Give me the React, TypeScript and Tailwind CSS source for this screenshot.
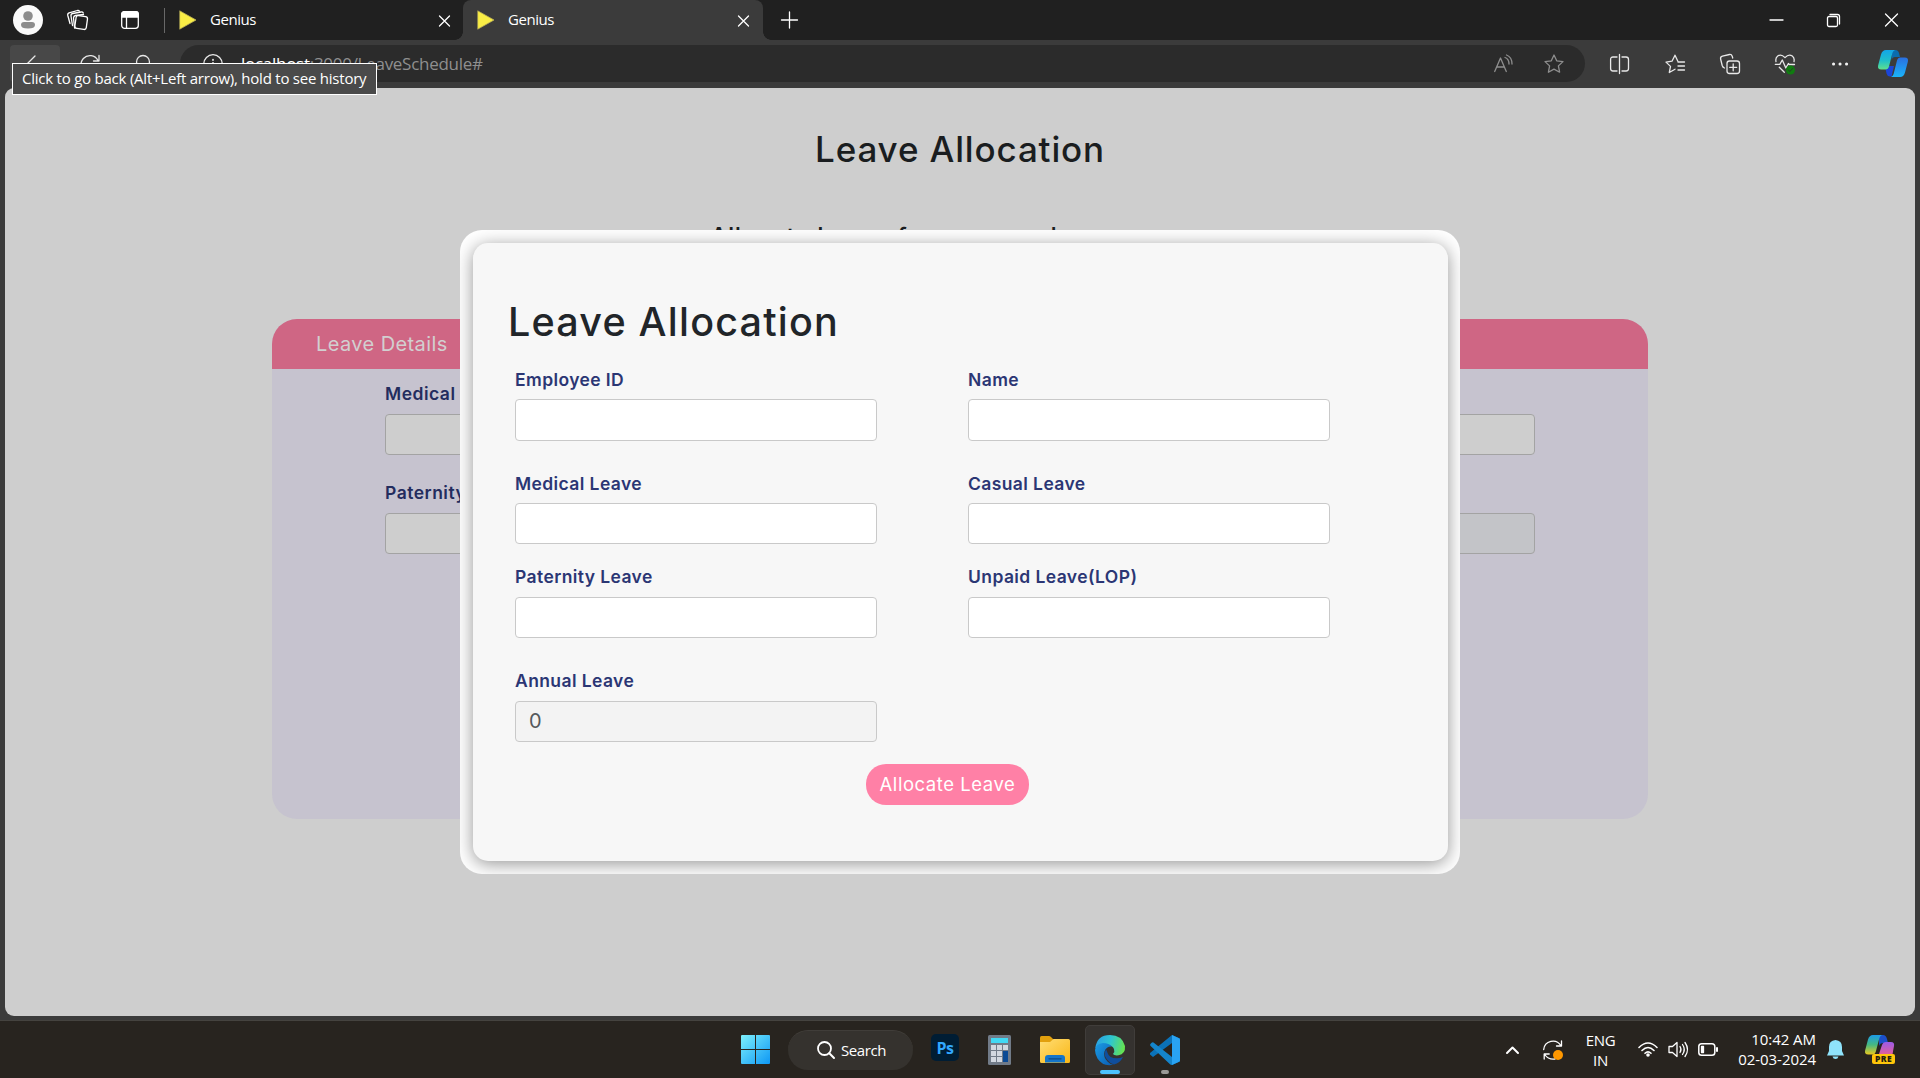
import type { ReactNode } from "react";

const ui = "font-['Open_Sans','Noto_Sans',sans-serif]";
const body = "font-[Inter,'Open_Sans',sans-serif]";

function Icon({ w, h, className = "", children }: { w: number; h: number; className?: string; children: ReactNode }) {
  return (
    <svg
      width={w}
      height={h}
      viewBox={`0 0 ${w} ${h}`}
      fill="none"
      stroke="currentColor"
      strokeWidth="1.3"
      strokeLinecap="round"
      strokeLinejoin="round"
      className={`block shrink-0 overflow-visible ${className}`}
    >
      {children}
    </svg>
  );
}

const Close = ({ className = "" }: { className?: string }) => (
  <Icon w={11} h={11} className={className}>
    <path d="M.5 1l10 10M10.5 1l-10 10" />
  </Icon>
);

const Favicon = ({ className = "" }: { className?: string }) => (
  <Icon w={18} h={20} className={className}>
    <path d="M1 1l16 9-16 9z" fill="#f9ed45" stroke="#b9ae55" strokeWidth=".8" />
  </Icon>
);

function TabStrip() {
  return (
    <div className="flex h-10 items-stretch bg-[#202020] text-white">
      <div className="flex w-[463px] items-center rounded-br-lg">
        <Icon w={30} h={30} className="ml-[13px]">
          <circle cx="15" cy="15" r="15" fill="#fafafa" stroke="none" />
          <circle cx="15" cy="11" r="4.8" fill="#8c8c8c" stroke="none" />
          <path d="M8 20q0-3 3-3h8q3 0 3 3 0 3.500-7 3.500T8 20z" fill="#8c8c8c" stroke="none" />
        </Icon>
        <Icon w={21} h={20} className="ml-[24px]">
          <rect x="8.500" y="6" width="11.500" height="13" rx="2.200" transform="rotate(8 14 12)" />
          <path d="M5.500 15.500L4 6q-.3-2 1.600-2.500l8.500-1.500q1.600-.2 2.200 1" />
          <path d="M3 13.500L.8 5.500q-.5-2 1.300-2.600l8.300-2.400q1.300-.3 2 .6M7.600 18L6.500 8q0-2 2-2.500l8-1" />
        </Icon>
        <Icon w={18} h={18} className="ml-[33px]">
          <rect x=".7" y=".7" width="16.600" height="16.600" rx="2.800" />
          <path d="M.7 6V3.500Q.7.700 3.500.7h11q2.800 0 2.800 2.800V6z" fill="white" />
          <path d="M5.500 6v11" />
        </Icon>
        <div className="ml-[25px] h-[25px] w-px bg-[#686868]" />
        <Favicon className="ml-[14px]" />
        <span className={`${ui} mb-[2px] ml-[13px] w-[229px] text-[15px] leading-5 tracking-[-0.45px]`}>Genius</span>
        <Close />
      </div>
      <div className="relative flex w-[300px] items-center rounded-t-lg bg-[#3b3b3b]">
        <div className="absolute -left-2 bottom-0 size-2 bg-[radial-gradient(circle_at_0_0,#202020_7.5px,#3b3b3b_8px)]" />
        <div className="absolute -right-2 bottom-0 size-2 bg-[radial-gradient(circle_at_100%_0,#202020_7.5px,#3b3b3b_8px)]" />
        <Favicon className="ml-[14px]" />
        <span className={`${ui} mb-[2px] ml-[13px] w-[230px] text-[15px] leading-5 tracking-[-0.45px]`}>Genius</span>
        <Close />
      </div>
      <div className="flex flex-1 items-center">
        <Icon w={17} h={17} className="ml-[18px]">
          <path d="M8.500 0v16M.500 8h16" />
        </Icon>
        <div className="flex-1" />
        <Icon w={13} h={13}>
          <path d="M0 6h13" />
        </Icon>
        <Icon w={13} h={13} className="ml-[44px]">
          <rect x=".5" y="2.500" width="10" height="10" rx="1.500" />
          <path d="M3 .5h7.500q2 0 2 2V10" />
        </Icon>
        <Icon w={13} h={13} className="mr-[22px] ml-[45px]">
          <path d="M.5 0l12 12M12.500 0l-12 12" />
        </Icon>
      </div>
    </div>
  );
}

function Copilot() {
  return (
    <Icon w={30} h={27}>
      <defs>
        <linearGradient id="cpA" x1="0" y1="0" x2="0" y2="1">
          <stop offset="0" stopColor="#13a5e8" />
          <stop offset=".55" stopColor="#20bfc9" />
          <stop offset="1" stopColor="#5fe08c" />
        </linearGradient>
        <linearGradient id="cpB" x1="0" y1="0" x2="0" y2="1">
          <stop offset="0" stopColor="#2a6fe0" />
          <stop offset="1" stopColor="#1ab4fa" />
        </linearGradient>
      </defs>
      <path d="M14 0h3.500q2.500 0 3.500 3l1 4h-5q-2.500 0-3.500 3z" fill="#0b6cae" stroke="none" />
      <path d="M8 16h8l-2.500 10.500H12q-2.500 0-3.300-2.500L7.500 19z" fill="#1b45d8" stroke="none" />
      <path d="M8 0h9q-2 .8-2.600 3L11 16.500q-.8 3-3.500 3H3.200Q-.7 19.500.1 15.500L3 4.500Q4.300 0 8 0z" fill="url(#cpA)" stroke="none" />
      <path d="M22 27h-9q2-.8 2.600-3L19 10.500q.8-3 3.500-3h4.300q3.900 0 3.100 4L27 22.500Q25.700 27 22 27z" fill="url(#cpB)" stroke="none" />
    </Icon>
  );
}

function Toolbar() {
  return (
    <div className="relative flex h-12 items-start bg-[#3b3b3b] pt-[5px] text-[#e8e8e8]">
      <div className="ml-[10px] flex h-[37px] w-[50px] items-center justify-center rounded bg-[#484848]">
        <Icon w={19} h={18}>
          <path d="M18.500 9H1M9 1L1 9l8 8" />
        </Icon>
      </div>
      <div className="flex h-[37px] w-[120px] items-center">
        <Icon w={20} h={20} className="ml-[20px]">
          <path d="M18 6.500A9 9 0 1 0 19 11M19 1.500v5.500h-5.500" />
        </Icon>
        <Icon w={18} h={18} className="ml-[34px]">
          <circle cx="9" cy="7" r="6.500" />
          <path d="M13.500 12l4 5" />
        </Icon>
      </div>
      <div className="flex h-[37px] w-[1405px] items-center rounded-full bg-[#2b2b2b]">
        <Icon w={20} h={20} className="ml-[23px]">
          <circle cx="10" cy="10" r="9.300" />
          <path d="M10 9v5.500M10 5.700v.3" strokeWidth="1.800" />
        </Icon>
        <div className={`${ui} ml-[18px] flex-1 text-[17px] leading-6 tracking-[-0.28px] text-[#8f8f8f]`}>
          <span className="text-white">localhost</span>:3000/LeaveSchedule#
        </div>
        <Icon w={19} h={18} className="mr-[31px] text-[#8e8e8e]">
          <path d="M.7 16.500L6.500 3l5.800 13.500M2.800 12h7.500M11 2.500q4 1.500 4 6.500M12.500 0q5.500 2 5.500 9" />
        </Icon>
        <Icon w={20} h={20} className="mr-[21px] text-[#8e8e8e]">
          <path d="M10 1l2.700 5.800 6.300.8-4.600 4.300 1.200 6.300-5.600-3.100-5.600 3.100 1.200-6.300L1 7.600l6.300-.8z" />
        </Icon>
      </div>
      <div className="flex h-[37px] flex-1 items-center">
        <Icon w={19} h={20} className="ml-[25px]">
          <path d="M7 3H3Q.600 3 .6 5.500v9Q.600 17 3 17h4M12 3h4q2.500 0 2.500 2.500v9Q18.500 17 16 17h-4M9.500.5v19" />
        </Icon>
        <Icon w={20} h={20} className="ml-[36px]">
          <path d="M13.200 8L10 1.200 7 7.200l-6 .9 4.500 4.300L4.300 18.500 10 15.200M13 8h6.500M13 12h6.500M13 16h6.500" />
        </Icon>
        <Icon w={20} h={20} className="ml-[35px]">
          <rect x="7" y="7" width="12.500" height="12.500" rx="2.500" />
          <path d="M13.200 9.800v7M9.700 13.300h7M4.500 14Q2.800 13.500 2.200 11.500L.6 5Q.2 2.800 2.400 2.200L9.500.5q2-.3 2.700 1.700l.5 1.800" />
        </Icon>
        <Icon w={20} h={20} className="ml-[35px]">
          <path d="M1 7.500Q.2 4 2.700 2 6.300-.3 10 3.600 13.700-.3 17.300 2 19.800 4 19 7.500M.3 10.300h4.500L7.300 6l3.500 8 2.600-4.500.8 1h5.300M4.300 13.200l5 5" />
          <circle cx="15.500" cy="16" r="4.500" fill="#107c10" stroke="none" />
          <path d="M13.500 16l1.400 1.500 2.700-3" stroke="#263f26" strokeWidth="1" />
        </Icon>
        <Icon w={18} h={4} className="mr-[29px] ml-[36px]">
          <path d="M2.500 2h.1M9 2h.1M15.500 2h.1" strokeWidth="3" stroke="#f2f2f2" />
        </Icon>
        <Copilot />
      </div>
      <div className={`${ui} absolute top-[23px] left-3 z-20 flex h-8 w-[365px] items-center border border-white bg-[#4a4a4a] pb-[2px] pl-[9px] text-[15px] tracking-[-0.23px] whitespace-nowrap text-white`}>
        Click to go back (Alt+Left arrow), hold to see history
      </div>
    </div>
  );
}

function Field({ label, value, tall = false, raised = false, className = "" }: { label: string; value?: string; tall?: boolean; raised?: boolean; className?: string }) {
  return (
    <div className={`w-[362px] ${className}`}>
      <div className={`h-[33px] text-[17.500px] font-semibold tracking-[0.4px] whitespace-nowrap text-[#2b3674] ${raised ? "leading-[26px]" : "leading-[28px]"}`}>{label}</div>
      <div className={`flex items-center rounded border border-[#c9c9c9] pl-[13px] text-[20px] text-[#55595c] ${tall ? "h-[42px]" : "h-[41px]"} ${value ? "bg-[#f3f3f3] pb-px" : "bg-white"}`}>
        {value}
      </div>
    </div>
  );
}

function BackField({ label, muted = false }: { label: string; muted?: boolean }) {
  return (
    <div className="w-[500px]">
      <div className="h-[34px] text-[17.500px] leading-[28px] font-semibold tracking-[0.5px] [word-spacing:1px] text-[#232c5e]">{label}</div>
      <div className={`h-[41px] rounded border border-[#a3a3a3] ${muted ? "bg-[#c3c4c8]" : "bg-[#cecece]"}`} />
    </div>
  );
}

function LeavePage() {
  return (
    <div className={`${body} relative mx-[5px] flex h-[928px] flex-col items-center overflow-hidden rounded-[9px] bg-[#cecece]`}>
      <h1 className="mt-[37px] h-[48px] text-[35px] leading-[48px] font-medium tracking-[0.85px] text-[#1a1d20]">Leave Allocation</h1>
      <h2 className="mt-[46px] ml-[705px] h-9 self-start text-[25px] leading-9 font-medium tracking-[0.35px] text-[#1a1d20]">Allocate Leave for new employee</h2>
      <div className="mt-[64px] h-[500px] w-[1376px] overflow-hidden rounded-[25px] bg-[#c6c3cf]">
        <div className="h-[50px] bg-[#cf6684] pl-[44px] text-[20px] leading-[50px] tracking-[0.4px] text-[#d2cfd0]">Leave Details</div>
        <div className="grid grid-cols-2 gap-x-[150px] gap-y-[24px] px-[113px] pt-[11px]">
          <BackField label="Medical Leave" />
          <BackField label="Casual Leave" />
          <BackField label="Paternity Leave" />
          <BackField label="Annual Leave" muted />
        </div>
      </div>

      <div className="absolute top-[142px] left-[455px] h-[644px] w-[1000px] overflow-hidden rounded-[22px] bg-white pt-[13px] pl-[13px]">
        <div className="h-[618px] w-[975px] rounded-[15px] bg-[#f7f7f7] pt-[49px] pl-[35px] shadow-[0_3px_18px_rgba(0,0,0,0.42)]">
          <h2 className="h-[60px] text-[39.500px] leading-[61px] font-medium tracking-[1.2px] text-[#212529]">Leave Allocation</h2>
          <div className="grid grid-cols-[362px_362px] gap-x-[91px] pt-[14px] pl-[7px]">
            <Field label="Employee ID" tall className="mb-[29px]" />
            <Field label="Name" tall className="mb-[29px]" />
            <Field label="Medical Leave" className="mb-[20px]" />
            <Field label="Casual Leave" className="mb-[20px]" />
            <Field label="Paternity Leave" raised className="mb-[30px]" />
            <Field label="Unpaid Leave(LOP)" raised className="mb-[30px]" />
            <Field label="Annual Leave" value="0" raised />
          </div>
          <button className="mt-[22px] ml-[358px] block h-[41px] w-[163px] rounded-[20px] bg-[#ff80a6] text-[18.500px] tracking-[0.55px] whitespace-nowrap text-white">
            Allocate Leave
          </button>
        </div>
      </div>
    </div>
  );
}

function WindowsLogo() {
  return (
    <Icon w={29} h={29}>
      <defs>
        <linearGradient id="win" x1="0" y1="0" x2="1" y2="1">
          <stop offset="0" stopColor="#7df0fb" />
          <stop offset="1" stopColor="#0d97f5" />
        </linearGradient>
      </defs>
      <path d="M1 0h13v14H0V1q0-1 1-1zM15 0h13q1 0 1 1v13H15zM0 15h14v14H1q-1 0-1-1zM15 15h14v13q0 1-1 1H15z" fill="url(#win)" stroke="none" />
    </Icon>
  );
}

function Calculator() {
  return (
    <Icon w={23} h={30}>
      <rect width="23" height="30" rx="1.500" fill="#717b88" stroke="none" />
      <rect x="3" y="3" width="17" height="5" fill="#42d9f4" stroke="none" />
      <path d="M3 10h5v5H3zM9 10h5v5H9zM15 10h5v5h-5zM3 16h5v5H3zM9 16h5v5H9zM3 22h5v5H3zM9 22h5v5H9z" fill="#d2d8e0" stroke="none" />
      <path d="M15 16h5v11h-5z" fill="#0b4a94" stroke="none" />
    </Icon>
  );
}

function Folder() {
  return (
    <Icon w={30} h={27}>
      <defs>
        <linearGradient id="fold" x1="0" y1="0" x2="1" y2="1">
          <stop offset="0" stopColor="#ffdd74" />
          <stop offset="1" stopColor="#f9b716" />
        </linearGradient>
      </defs>
      <path d="M0 10V1.500Q0 0 1.500 0H9q1 0 2 1l2.500 2.500V10z" fill="#e2a00d" stroke="none" />
      <path d="M0 6h10l3.500-3H28.500Q30 3 30 4.500V25.500Q30 27 28.500 27h-27Q0 27 0 25.500z" fill="url(#fold)" stroke="none" />
      <path d="M5 26.500V22q0-3 3-3h14q3 0 3 3v4.500z" fill="#1475c9" stroke="none" />
      <path d="M9 22.800h12" stroke="#0b4a86" />
    </Icon>
  );
}

function Edge() {
  return (
    <Icon w={30} h={30}>
      <defs>
        <linearGradient id="eTop" x1="0" y1=".3" x2="1" y2=".5">
          <stop offset="0" stopColor="#2a9fe4" />
          <stop offset=".5" stopColor="#2fc6cf" />
          <stop offset="1" stopColor="#66e34f" />
        </linearGradient>
        <linearGradient id="eLow" x1="0" y1="0" x2="1" y2="1">
          <stop offset="0" stopColor="#1b9ce4" />
          <stop offset="1" stopColor="#0a5bb2" />
        </linearGradient>
      </defs>
      <path d="M.3 13Q2 0 15 0 27 0 30 11q.7 8-6.500 9.300-4.500.5-5.500-1.300 2-2.500 1-5-1.500-4-7.500-4Q4 10 .3 13z" fill="url(#eTop)" stroke="none" />
      <path d="M0 15Q.5 8.500 8 8q6 0 9 3.500-5.500-.5-7.500 5Q8 22 12.500 26.500q2 2.500 6 3.200Q8 32 2.500 23.500 0 19 0 15z" fill="url(#eLow)" stroke="none" />
      <path d="M11 14q-3 6 1 10.500 3 4 7 5 6-1.300 9-7.500-3 1.300-6 1.300-8 0-9.500-5.500Q12 16 11 14z" fill="#104e9c" stroke="none" />
    </Icon>
  );
}

function VsCode() {
  return (
    <Icon w={30} h={30}>
      <path d="M22 0L30 3.500V26.500L22 30V8L3 22 0 19.500V18z" fill="#0b72b8" stroke="none" />
      <path d="M22 22L3.500 7.500Q2.500 7 1.600 7.700L.4 9q-.8 1 .2 2L20 29.200q1 1 2 .8z" fill="#1485cc" stroke="none" />
      <path d="M22 0l7 3.300q1 .5 1 1.700v20q0 1.200-1 1.700L22 30z" fill="#29a3f2" stroke="none" />
    </Icon>
  );
}

function CopilotPre() {
  return (
    <Icon w={30} h={29}>
      <defs>
        <linearGradient id="pA" x1="0" y1="0" x2="0" y2="1">
          <stop offset="0" stopColor="#1c9be8" />
          <stop offset=".5" stopColor="#45b982" />
          <stop offset="1" stopColor="#e9c91f" />
        </linearGradient>
        <linearGradient id="pB" x1="0" y1="0" x2="0" y2="1">
          <stop offset="0" stopColor="#9b5be8" />
          <stop offset="1" stopColor="#f0608c" />
        </linearGradient>
      </defs>
      <path d="M14 0h4q3 0 4 4l1 4h-5q-3 0-4 3z" fill="#1c4fc9" stroke="none" />
      <path d="M8 0h9q-2 .8-2.600 3L11 16q-.8 3.500-3.500 3.500H3.200Q-.700 19.500.1 15.500L3 4.500Q4.300 0 8 0z" fill="url(#pA)" stroke="none" />
      <path d="M13 22l4-12q1-3 4-3h5q3.700 0 3 4l-2 11z" fill="url(#pB)" stroke="none" />
      <rect x="7" y="19" width="23" height="10" rx="2" fill="#ffc60a" stroke="none" />
      <text x="18.500" y="27.200" textAnchor="middle" fontFamily="Open Sans" fontWeight="800" fontSize="8.500" fill="#241e10" stroke="none" letterSpacing=".4">
        PRE
      </text>
    </Icon>
  );
}

function Taskbar() {
  return (
    <div className={`${ui} flex h-[58px] items-center border-t border-[#45433f] bg-[#28241f] text-[15px] text-white`}>
      <div className="ml-[741px] flex h-full items-center">
        <WindowsLogo />
        <div className="ml-[18px] flex h-10 w-[125px] items-center rounded-full border-t border-[#403d39] bg-[#35322e] pl-[29px]">
          <Icon w={18} h={18}>
            <circle cx="7.500" cy="7.500" r="6.500" strokeWidth="1.800" />
            <path d="M12.300 12.300L17 17" strokeWidth="2" />
          </Icon>
          <span className="ml-[6px] tracking-[-0.4px]">Search</span>
        </div>
        <div className="mb-[4px] ml-[18px] flex h-[27px] w-[28px] items-center justify-center rounded-[5px] bg-[#001d34] text-[16px] font-bold tracking-[-0.4px] text-[#31a8ff]">Ps</div>
        <div className="ml-[29px]"><Calculator /></div>
        <div className="ml-[29px]"><Folder /></div>
        <div className="ml-[15px] flex h-[50px] w-[50px] flex-col items-center rounded-[5px] border border-[#403d3a] bg-[#35322f] pt-[9px]">
          <Edge />
          <div className="mt-[5px] h-1 w-5 shrink-0 rounded-full bg-[#4cc2ff]" />
        </div>
        <div className="ml-[15px] flex h-[50px] flex-col items-center pt-[10px]">
          <VsCode />
          <div className="mt-[5px] h-1 w-2 shrink-0 rounded-full bg-[#9b9996]" />
        </div>
      </div>
      <div className="mr-[25px] ml-auto flex h-full items-center">
        <Icon w={13} h={8}>
          <path d="M1 7l5.500-5.500L12 7" strokeWidth="2" />
        </Icon>
        <Icon w={20} h={20} className="ml-[24px]">
          <path d="M.7 9.500A9.300 9.300 0 0 1 17.800 5.500M18.500 1v5h-5M12 19Q5.500 20 1.700 14.500M1.200 19v-5h5" />
          <circle cx="15" cy="15" r="5" fill="#ff9800" stroke="none" />
        </Icon>
        <div className="ml-[22px] w-[31px] text-center leading-5 tracking-[-0.3px]">ENG<br />IN</div>
        <Icon w={20} h={15} className="ml-[22px]">
          <path d="M1 5.500Q10-3.500 19 5.500M4 8.500q6-6 12 0M7 11.300q3-3 6 0" strokeWidth="1.600" />
          <circle cx="10" cy="13" r="1.800" fill="white" stroke="none" />
        </Icon>
        <Icon w={20} h={17} className="ml-[10px]">
          <path d="M1 5.500h3.500L9 1.500v14l-4.500-4H1zM12 5.500q2 3 0 6M14.500 3.500q3.500 5 0 10M17 1.500q5 7 0 14" />
        </Icon>
        <Icon w={20} h={13} className="ml-[10px]">
          <rect x=".8" y=".8" width="16" height="11.400" rx="2.800" strokeWidth="1.500" />
          <path d="M3.500 3.500h2v6h-2z" fill="white" />
          <path d="M19 5v3" strokeWidth="2" />
        </Icon>
        <div className="mb-px ml-[14px] w-[84px] text-right leading-5 tracking-[-0.05px] whitespace-nowrap">
          10:42 AM
          <br />
          02-03-2024
        </div>
        <Icon w={17} h={19} className="ml-[11px]">
          <path d="M8.500 0Q15 .5 15 7v4l2 4.500H0L2 11V7Q2 .5 8.500 0zM5.500 16.500h6q-.7 2.500-3 2.500t-3-2.500z" fill="#8fe3fb" stroke="none" />
        </Icon>
        <div className="ml-[21px]"><CopilotPre /></div>
      </div>
    </div>
  );
}

export default function App() {
  return (
    <div className="flex h-[1078px] w-[1920px] flex-col overflow-hidden bg-[#3b3b3b]">
      <TabStrip />
      <Toolbar />
      <LeavePage />
      <div className="h-[4px] bg-[#3b3b3b]" />
      <Taskbar />
    </div>
  );
}
